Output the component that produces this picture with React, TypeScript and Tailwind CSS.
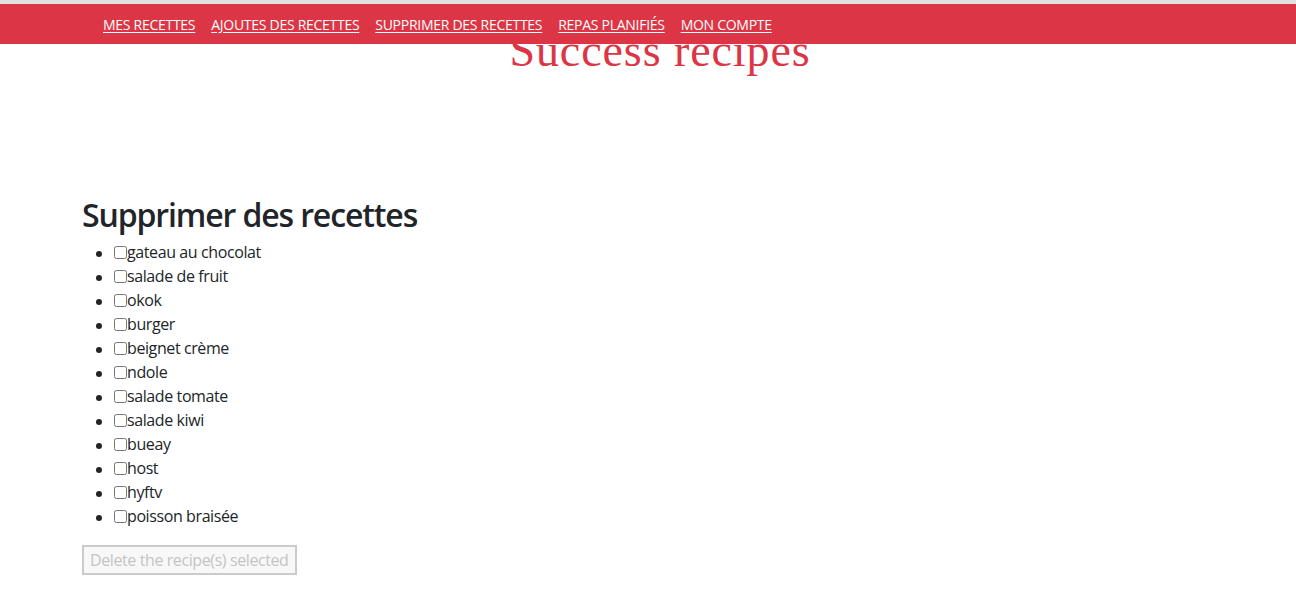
const links = ['MES RECETTES', 'AJOUTES DES RECETTES', 'SUPPRIMER DES RECETTES', 'REPAS PLANIFIÉS', 'MON COMPTE']

const recipes = [
  'gateau au chocolat',
  'salade de fruit',
  'okok',
  'burger',
  'beignet crème',
  'ndole',
  'salade tomate',
  'salade kiwi',
  'bueay',
  'host',
  'hyftv',
  'poisson braisée',
]

export default function App() {
  return (
    <div className="min-h-[594px] bg-white font-['Open_Sans',sans-serif] text-[#212529]">
      {/* top strip + navbar (sits over the title) */}
      <div className="h-[4px] bg-[#e0e0e0]" />
      <nav className="relative z-10 flex h-[40px] items-center gap-4 bg-[#dc3545] pl-[103px]">
        {links.map((l) => (
          <a key={l} href="#" className="text-[14px] tracking-[-0.02em] text-white underline underline-offset-2">
            {l}
          </a>
        ))}
      </nav>

      <h1 className="-mt-[16px] pl-[24px] text-center font-['Liberation_Serif',serif] text-[46px] leading-[46px] tracking-[0.02em] text-[#dc3545]">
        Success recipes
      </h1>

      <div className="px-[82px] pt-[122px]">
        <h2 className="mb-[6px] text-[32px] font-semibold leading-[38px] tracking-[-0.035em]">Supprimer des recettes</h2>
        <ul className="list-disc pl-[32px] text-[16px] leading-[24px] tracking-[-0.025em]">
          {recipes.map((r) => (
            <li key={r}>
              <label className="flex items-center">
                <input type="checkbox" className="m-0 h-[13px] w-[13px]" />
                <span>{r}</span>
              </label>
            </li>
          ))}
        </ul>
        <button
          disabled
          className="mt-[17px] h-[30px] border-2 border-[#cbcbcb] bg-[#f8f8f8] px-[6px] text-[16px] tracking-[-0.025em] text-[#c4c4c4]"
        >
          Delete the recipe(s) selected
        </button>
      </div>
    </div>
  )
}
